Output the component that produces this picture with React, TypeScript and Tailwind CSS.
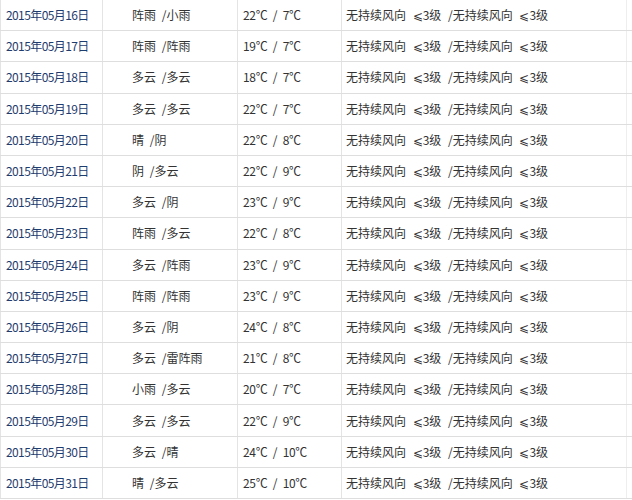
const rows: [string, string, string, string][] = [
  ["16", "阵雨 /小雨", "22", "7"],
  ["17", "阵雨 /阵雨", "19", "7"],
  ["18", "多云 /多云", "18", "7"],
  ["19", "多云 /多云", "22", "7"],
  ["20", "晴 /阴", "22", "8"],
  ["21", "阴 /多云", "22", "9"],
  ["22", "多云 /阴", "23", "9"],
  ["23", "阵雨 /多云", "22", "8"],
  ["24", "多云 /阵雨", "23", "9"],
  ["25", "阵雨 /阵雨", "23", "9"],
  ["26", "多云 /阴", "24", "8"],
  ["27", "多云 /雷阵雨", "21", "8"],
  ["28", "小雨 /多云", "20", "7"],
  ["29", "多云 /多云", "22", "9"],
  ["30", "多云 /晴", "24", "10"],
  ["31", "晴 /多云", "25", "10"],
]

export default function App() {
  return (
    <div
      className="w-[632px] h-[500px] overflow-hidden bg-white text-[12px] text-[#333]"
      style={{ fontFamily: '"Noto Sans CJK SC", "Noto Sans", sans-serif' }}
    >
      {rows.map(([day, weather, hi, lo]) => (
        <div
          key={day}
          className="grid grid-cols-[103px_135px_104px_285px_5px] h-[31.2px] border-b border-[#dedede]"
        >
          <div className="flex items-center pl-[5px] border-l border-r border-[#e4e4e4] text-[#1f3c6e] tracking-[-0.6px]">
            2015年05月{day}日
          </div>
          <div className="flex items-center pl-[29px] border-r border-[#e4e4e4] whitespace-pre [word-spacing:3px]">
            {weather}
          </div>
          <div className="flex items-center pl-[5px] border-r border-[#e4e4e4] whitespace-pre [word-spacing:3px] tracking-[-0.3px]">
            {hi}℃ / {lo}℃
          </div>
          <div className="flex items-center pl-[4px] border-r border-[#eeeeee] whitespace-pre [word-spacing:4px]">
            无持续风向 ⩽3级 /无持续风向 ⩽3级
          </div>
          <div />
        </div>
      ))}
    </div>
  )
}
